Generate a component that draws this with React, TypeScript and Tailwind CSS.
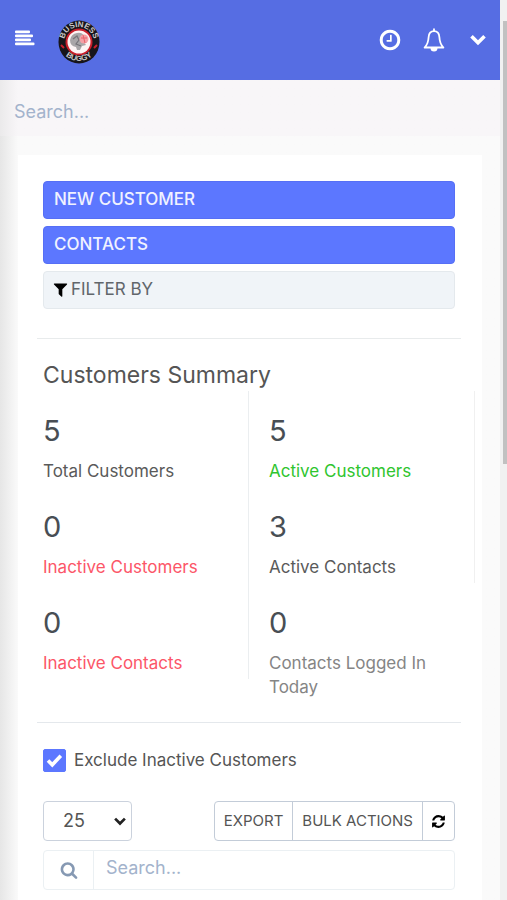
import { useState } from 'react';

const iconPaths = {
  clock:
    'M1024 544v448q0 14-9 23t-23 9h-320q-14 0-23-9t-9-23v-64q0-14 9-23t23-9h224v-352q0-14 9-23t23-9h64q14 0 23 9t9 23zm416 352q0-148-73-273t-198-198-273-73-273 73-198 198-73 273 73 273 198 198 273 73 273-73 198-198 73-273zm224 0q0 209-103 385.5t-279.5 279.5-385.5 103-385.5-103-279.5-279.5-103-385.5 103-385.5 279.5-279.5 385.5-103 385.5 103 279.5 279.5 103 385.5z',
  filter:
    'M1595 295q17 41-14 70l-493 493v742q0 42-39 59-13 5-25 5-27 0-45-19l-256-256q-19-19-19-45v-486l-493-493q-31-29-14-70 17-39 59-39h1280q42 0 59 39z',
  refresh:
    'M1639 1056q0 5-1 7-64 268-268 434.5t-478 166.5q-146 0-282.5-55t-243.5-157l-129 129q-19 19-45 19t-45-19-19-45v-448q0-26 19-45t45-19h448q26 0 45 19t19 45-19 45l-137 137q71 66 161 102t187 36q134 0 250-65t186-179q11-17 53-117 8-23 30-23h192q13 0 22.5 9.5t9.5 22.5zm25-800v448q0 26-19 45t-45 19h-448q-26 0-45-19t-19-45 19-45l138-138q-148-137-349-137-134 0-250 65t-186 179q-11 17-53 117-8 23-30 23h-199q-13 0-22.5-9.5t-9.5-22.5v-7q65-268 270-434.5t480-166.5q146 0 284 55.5t245 156.5l130-129q19-19 45-19t45 19 19 45z',
  search:
    'M1216 832q0-185-131.5-316.5t-316.5-131.5-316.5 131.5-131.5 316.5 131.5 316.5 316.5 131.5 316.5-131.5 131.5-316.5zm512 832q0 52-38 90t-90 38q-54 0-90-38l-343-342q-179 124-399 124-143 0-273.5-55.5t-225-150-150-225-55.5-273.5 55.5-273.5 150-225 225-150 273.5-55.5 273.5 55.5 225 150 150 225 55.5 273.5q0 220-124 399l343 343q37 37 37 90z',
};

function Icon({ name, className }: { name: keyof typeof iconPaths; className: string }) {
  return (
    <svg viewBox="0 0 1792 1792" className={className} fill="currentColor" aria-hidden="true">
      <path d={iconPaths[name]} />
    </svg>
  );
}

function Chevron({ className }: { className: string }) {
  return (
    <svg viewBox="0 0 16 12" className={className} fill="none" stroke="currentColor" strokeWidth="3.6" aria-hidden="true">
      <path d="M1.5 2.2 8 8.7l6.5-6.5" />
    </svg>
  );
}

function Logo() {
  return (
    <svg viewBox="0 0 42 44" className="h-11 w-[42px]" role="img" aria-label="Business Buggy">
      <defs>
        <path id="logo-top" d="M6 22a15 15 0 0 1 30 0" />
        <path id="logo-bottom" d="M1 21a20 20 0 0 0 40 0" />
      </defs>
      <ellipse cx="21" cy="22" rx="20.5" ry="21.5" fill="#17151a" />
      <circle cx="21" cy="22" r="13.5" fill="#c91f2b" />
      <circle cx="21" cy="22" r="11.5" fill="#fdf4f4" />
      <path d="M12 20q1-6 7-7 5-1 7 3l-1 5 3 4-4 1-2 4h-3l-1-3q-6-1-6-7z" fill="#a9a6a8" />
      <path d="M15 19l4-3 2 4-3 4 5 2" fill="none" stroke="#77757a" strokeWidth="1.2" />
      <circle cx="26" cy="19" r="4.5" fill="#f5a0a6" />
      <path d="M23 18h6M25 15l2 8" stroke="#e8606a" />
      <path d="M3 25l3 3M39 25l-3 3" stroke="#c91f2b" strokeWidth="2" />
      <g fill="#c9c7c8" fontFamily="Liberation Sans, sans-serif" fontWeight="700" fontSize="8" textAnchor="middle">
        <text>
          <textPath href="#logo-top" startOffset="50%">BUSINESS</textPath>
        </text>
        <text>
          <textPath href="#logo-bottom" startOffset="50%">BUGGY</textPath>
        </text>
      </g>
    </svg>
  );
}

const totals = [
  { value: 5, label: 'Total Customers', color: 'text-[#5a5a5a]' },
  { value: 0, label: 'Inactive Customers', color: 'text-[#fc5668]' },
  { value: 0, label: 'Inactive Contacts', color: 'text-[#fc5668]' },
];

const active = [
  { value: 5, label: 'Active Customers', color: 'text-[#2fc52f]' },
  { value: 3, label: 'Active Contacts', color: 'text-[#5a5a5a]' },
  { value: 0, label: 'Contacts Logged In Today', color: 'text-[#858585]' },
];

function Stat({ value, label, color }: (typeof totals)[number]) {
  return (
    <div className="min-h-24 px-5 pt-[22px]">
      <div className="text-[29px] leading-9 text-[#484e54]">{value}</div>
      <div className={`pt-2.5 text-[17px] leading-6 ${color}`}>{label}</div>
    </div>
  );
}

export default function App() {
  const [exclude, setExclude] = useState(true);

  return (
    <div className="flex min-h-screen bg-[#f8f8f8] font-[Inter,sans-serif] text-[#555]">
      <div className="flex min-w-0 flex-1 flex-col">
        <header className="flex h-20 items-center bg-[#566de3] px-[15px] text-white">
          <button type="button" aria-label="Toggle menu">
            <svg viewBox="0 0 20 16" className="mb-1 h-4 w-5" fill="currentColor">
              <rect x="0" y="0.5" width="15" height="2.8" rx="1" />
              <rect x="0" y="4.5" width="18" height="2.8" rx="1" />
              <rect x="0" y="8.5" width="16" height="2.8" rx="1" />
              <rect x="0" y="12.5" width="19.5" height="2.8" rx="1" />
            </svg>
          </button>
          <a href="#home" className="ml-[23px] pt-1">
            <Logo />
          </a>
          <div className="-mr-px ml-auto flex items-center">
            <button type="button" aria-label="Timers">
              <Icon name="clock" className="size-6" />
            </button>
            <button type="button" aria-label="Notifications" className="ml-5">
              <svg viewBox="0 0 24 24" className="size-6" fill="none" stroke="currentColor" strokeWidth="1.8" strokeLinejoin="round">
                <path d="M12 3.2c-3.6 0-5.2 2.800-5.400 6-.2 4.600-1.400 7.600-4 10.300h18.800c-2.600-2.700-3.800-5.700-4-10.300-.2-3.200-1.800-6-5.400-6z" />
                <path d="M12 3V1.200" strokeLinecap="round" />
                <path d="M8.500 20h7a3.500 3.500 0 0 1-7 0z" fill="currentColor" stroke="none" />
              </svg>
            </button>
            <button type="button" aria-label="Open menu" className="ml-6">
              <Chevron className="h-3 w-4" />
            </button>
          </div>
        </header>

        <div className="flex flex-1 flex-col bg-linear-to-r from-[#e6e6e6] to-[#fafafa] to-[18px]">
          <div className="bg-linear-to-r from-[#ebeaeb] to-[#f8f6f8] to-[18px]">
            <input
              type="text"
              aria-label="Search"
              placeholder="Search..."
              className="block h-14 w-full bg-transparent px-3.5 pt-1.5 text-lg outline-none placeholder:text-[#a3b3cc]"
            />
          </div>

          <main className="mx-[18px] mt-[19px] flex-1 bg-white pb-2 pl-[25px] pr-[27px] pt-[26px]">
            <div className="flex flex-col gap-[7px] text-[17px] font-medium">
              <a href="#new" className="rounded border border-[#566ff5] bg-[#5c77ff] px-2.5 pb-[7px] pt-[5px] leading-6 text-[#f0f2ff]">
                NEW CUSTOMER
              </a>
              <a href="#contacts" className="rounded border border-[#566ff5] bg-[#5c77ff] px-2.5 pb-[7px] pt-[5px] leading-6 text-[#f0f2ff]">
                CONTACTS
              </a>
              <button
                type="button"
                className="flex items-center rounded border border-[#e4e9ed] bg-[#f0f4f8] px-2 pb-[7px] pt-[5px] text-left font-normal leading-6 text-[#61666b]"
              >
                <Icon name="filter" className="mr-0.5 size-[17px] text-black" />
                FILTER BY
              </button>
            </div>

            <hr className="-mx-1.5 mt-[29px] border-[#e8ebec]" />

            <h1 className="mt-5 text-[23px] leading-8">Customers Summary</h1>

            <div className="-mx-5 grid grid-cols-2 items-start">
              <div className="border-r border-[#ebeef0]">
                {totals.map((stat) => (
                  <Stat key={stat.label} {...stat} />
                ))}
              </div>
              <div>
                {active.map((stat, index) => (
                  <div key={stat.label} className={index < 2 ? 'border-r border-[#f0f0f0]' : ''}>
                    <Stat {...stat} />
                  </div>
                ))}
              </div>
            </div>

            <hr className="-mx-1.5 mt-[23px] border-[#e4e8ec]" />

            <div className="mt-[26px] flex items-center">
              <span className="relative flex">
                <input
                  id="exclude"
                  type="checkbox"
                  checked={exclude}
                  onChange={(e) => setExclude(e.target.checked)}
                  className="size-[23px] appearance-none rounded-xs border border-[#5c77ff] bg-white checked:bg-[#5c77ff]"
                />
                {exclude && (
                  <svg viewBox="0 0 23 23" className="pointer-events-none absolute inset-0" fill="none" stroke="#fff" strokeWidth="3.6">
                    <path d="M5 11.500l4.300 4.300 8.500-9" />
                  </svg>
                )}
              </span>
              <label htmlFor="exclude" className="pb-0.5 pl-2 text-[17px] leading-5">
                Exclude Inactive Customers
              </label>
            </div>

            <div className="mt-[29px] flex justify-between">
              <div className="relative">
                <select
                  aria-label="Rows per page"
                  defaultValue="25"
                  className="h-10 w-[89px] appearance-none rounded border border-[#cbd2dd] bg-white pl-[19px] text-lg"
                >
                  <option>10</option>
                  <option>25</option>
                  <option>50</option>
                  <option>100</option>
                </select>
                <Chevron className="pointer-events-none absolute right-1.5 top-4 h-[9px] w-3 text-[#222]" />
              </div>
              <div className="flex divide-x divide-[#c3ccd8] rounded border border-[#c3ccd8] bg-white text-[15px]">
                <button type="button" className="px-[9px]">
                  EXPORT
                </button>
                <button type="button" className="px-[9px]">
                  BULK ACTIONS
                </button>
                <button type="button" aria-label="Reload" className="px-2 text-black">
                  <Icon name="refresh" className="size-[15px]" />
                </button>
              </div>
            </div>

            <div className="mt-[9px] flex h-10 rounded border border-[#ebf0f3]">
              <label htmlFor="table-search" className="flex w-[50px] items-center justify-center border-r border-[#ebf0f3]">
                <Icon name="search" className="size-[18px] text-[#8699b3]" />
              </label>
              <input
                id="table-search"
                type="text"
                placeholder="Search..."
                className="min-w-0 flex-1 px-3 pb-1 text-lg outline-none placeholder:text-[#a3b3cc]"
              />
            </div>
          </main>
        </div>
      </div>

      {/* Scroll track */}
      <div className="w-[7px] bg-[#f1f1f1] pl-[3px] pt-[21px]">
        <div className="h-[443px] bg-[#c1c1c1]" />
      </div>
    </div>
  );
}
